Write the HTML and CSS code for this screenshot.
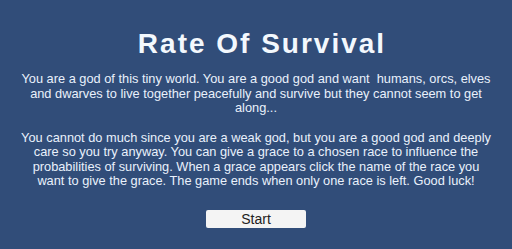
FILE: index.html
```html
<!DOCTYPE html>
<html lang="en">
<head>
  <meta charset="UTF-8" />
  <title>Rate Of Survival</title>
  <link rel="stylesheet" href="styles.css">
</head>
<body>
  <div class="intro">
    <h1>Rate Of Survival</h1>
    <p class="story">You are a god of this tiny world. You are a good god and want&nbsp; humans, orcs, elves and dwarves to live together peacefully and survive but they cannot seem to get along...</p>
    <p class="story">You cannot do much since you are a weak god, but you are a good god and deeply care so you try anyway. You can give a grace to a chosen race to influence the probabilities of surviving. When a grace appears click the name of the race you want to give the grace. The game ends when only one race is left. Good luck!</p>
    <button class="start-btn">Start</button>
  </div>
</body>
</html>
```

FILE: styles.css
```css
* {
  box-sizing: border-box;
}
body {
  margin: 0;
  background-color: #314d79;
  font-family: 'Liberation Sans', Arial, sans-serif;
  color: #e9f1fc;
  width: 512px;
  height: 249px;
  overflow: hidden;
}
.intro {
  display: flex;
  flex-direction: column;
  align-items: center;
  padding-top: 28px;
}
h1 {
  margin: 0;
  padding-left: 12px;
  font-size: 28px;
  font-weight: bold;
  letter-spacing: 2px;
  color: #f3f8fd;
  line-height: 32px;
}
.story {
  margin: 0;
  width: 474px;
  text-align: center;
  font-size: 12.8px;
  line-height: 14.5px;
}
.story:first-of-type {
  margin-top: 12px;
}
.story + .story {
  margin-top: 15px;
}
.start-btn {
  margin-top: 21px;
  width: 100px;
  height: 18px;
  padding: 0;
  border: none;
  border-radius: 2px;
  background: #f4f4f4;
  color: #222;
  font-family: 'Liberation Sans', Arial, sans-serif;
  font-size: 14px;
  line-height: 18px;
}
```
